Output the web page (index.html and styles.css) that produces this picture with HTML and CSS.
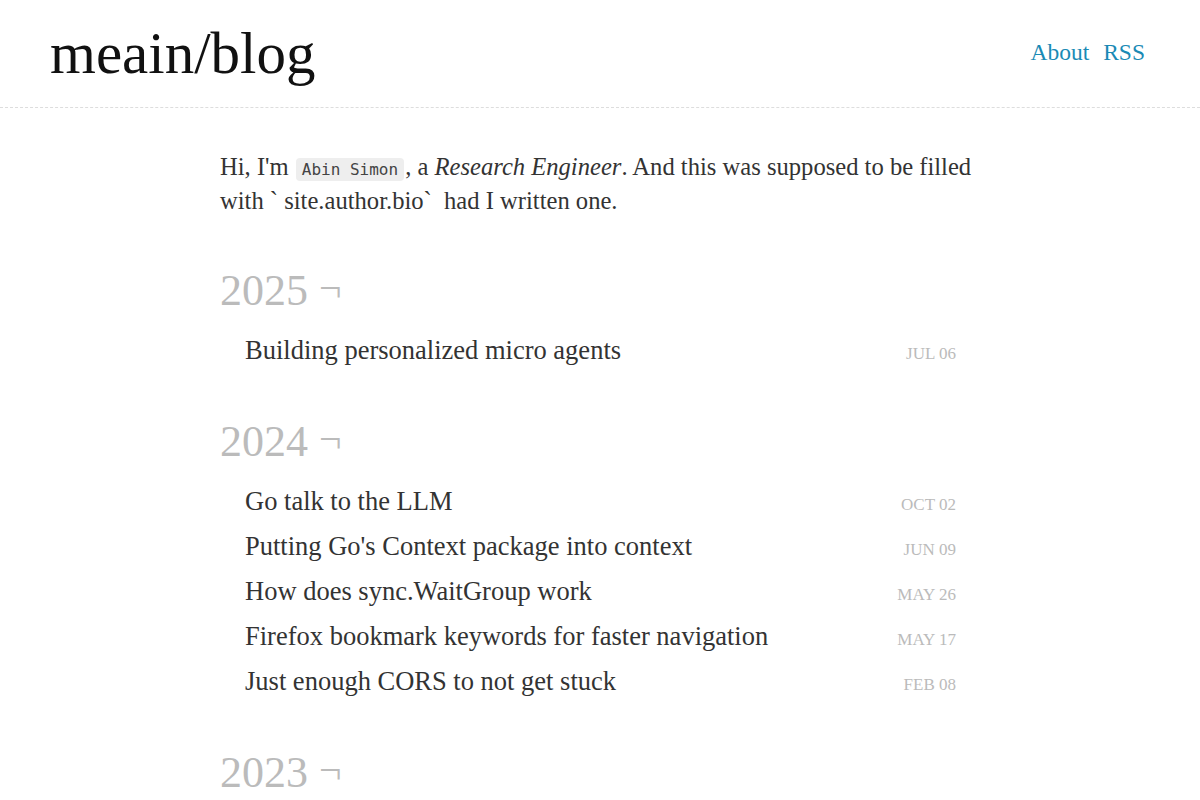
FILE: index.html
```html
<!DOCTYPE html>
<html lang="en">
<head>
<meta charset="utf-8">
<title>meain/blog</title>
<link rel="stylesheet" href="styles.css">
</head>
<body>
<header class="site-header">
  <a class="site-title" href="#">meain/blog</a>
  <nav class="site-nav">
    <a href="#">About</a>
    <a href="#">RSS</a>
  </nav>
</header>
<main class="content">
  <p class="intro">Hi, I'm <code>Abin Simon</code>, a <em>Research Engineer</em>. And this was supposed to be filled with ` site.author.bio`&nbsp; had I written one.</p>

  <section class="year">
    <h2 class="year-title">2025 <span class="hook">¬</span></h2>
    <ul class="posts">
      <li><a href="#">Building personalized micro agents</a><span class="date">Jul 06</span></li>
    </ul>
  </section>

  <section class="year">
    <h2 class="year-title">2024 <span class="hook">¬</span></h2>
    <ul class="posts">
      <li><a href="#">Go talk to the LLM</a><span class="date">Oct 02</span></li>
      <li><a href="#">Putting Go's Context package into context</a><span class="date">Jun 09</span></li>
      <li><a href="#">How does sync.WaitGroup work</a><span class="date">May 26</span></li>
      <li><a href="#">Firefox bookmark keywords for faster navigation</a><span class="date">May 17</span></li>
      <li><a href="#">Just enough CORS to not get stuck</a><span class="date">Feb 08</span></li>
    </ul>
  </section>

  <section class="year">
    <h2 class="year-title">2023 <span class="hook">¬</span></h2>
  </section>
</main>
</body>
</html>
```

FILE: styles.css
```css
html, body {
  margin: 0;
  padding: 0;
  background: #fff;
}
body {
  font-family: "Liberation Serif", "DejaVu Serif", serif;
  color: #333;
}
a {
  text-decoration: none;
}
.site-header {
  display: flex;
  align-items: center;
  justify-content: space-between;
  height: 107px;
  padding: 0 55px 0 50px;
  border-bottom: 1px dashed #ddd;
}
.site-title {
  font-size: 59px;
  color: #111;
  line-height: 1;
  margin-top: 0;
}
.site-nav {
  display: flex;
  gap: 14px;
  margin-top: -2px;
}
.site-nav a {
  font-size: 23.5px;
  color: #1a8ab5;
}
.content {
  width: 765px;
  margin: 0 auto 0 220px;
  padding-top: 42px;
}
.intro {
  margin: 0 0 48px;
  font-size: 24.6px;
  line-height: 34px;
  color: #333;
}
.intro code {
  font-family: "DejaVu Sans Mono", "Liberation Mono", monospace;
  font-size: 16px;
  line-height: 1;
  background: #eee;
  border-radius: 4px;
  padding: 2px 6px;
  margin: 0 1px;
  color: #444;
}
.intro em {
  font-style: italic;
}
.year {
  margin-top: 44px;
}
.year-title {
  margin: 0;
  font-weight: normal;
  font-size: 44px;
  line-height: 50px;
  color: #bbb;
}
.hook {
  font-size: 40px;
  position: relative;
  top: -4px;
}
.posts {
  list-style: none;
  margin: 11px 0 0;
  padding: 0 29px 0 25px;
}
.posts li {
  display: flex;
  align-items: baseline;
  justify-content: space-between;
  height: 45px;
  line-height: 45px;
}
.posts a {
  font-size: 26.5px;
  color: #333;
}
.date {
  font-size: 17px;
  text-transform: uppercase;
  color: #bbb;
}
```
